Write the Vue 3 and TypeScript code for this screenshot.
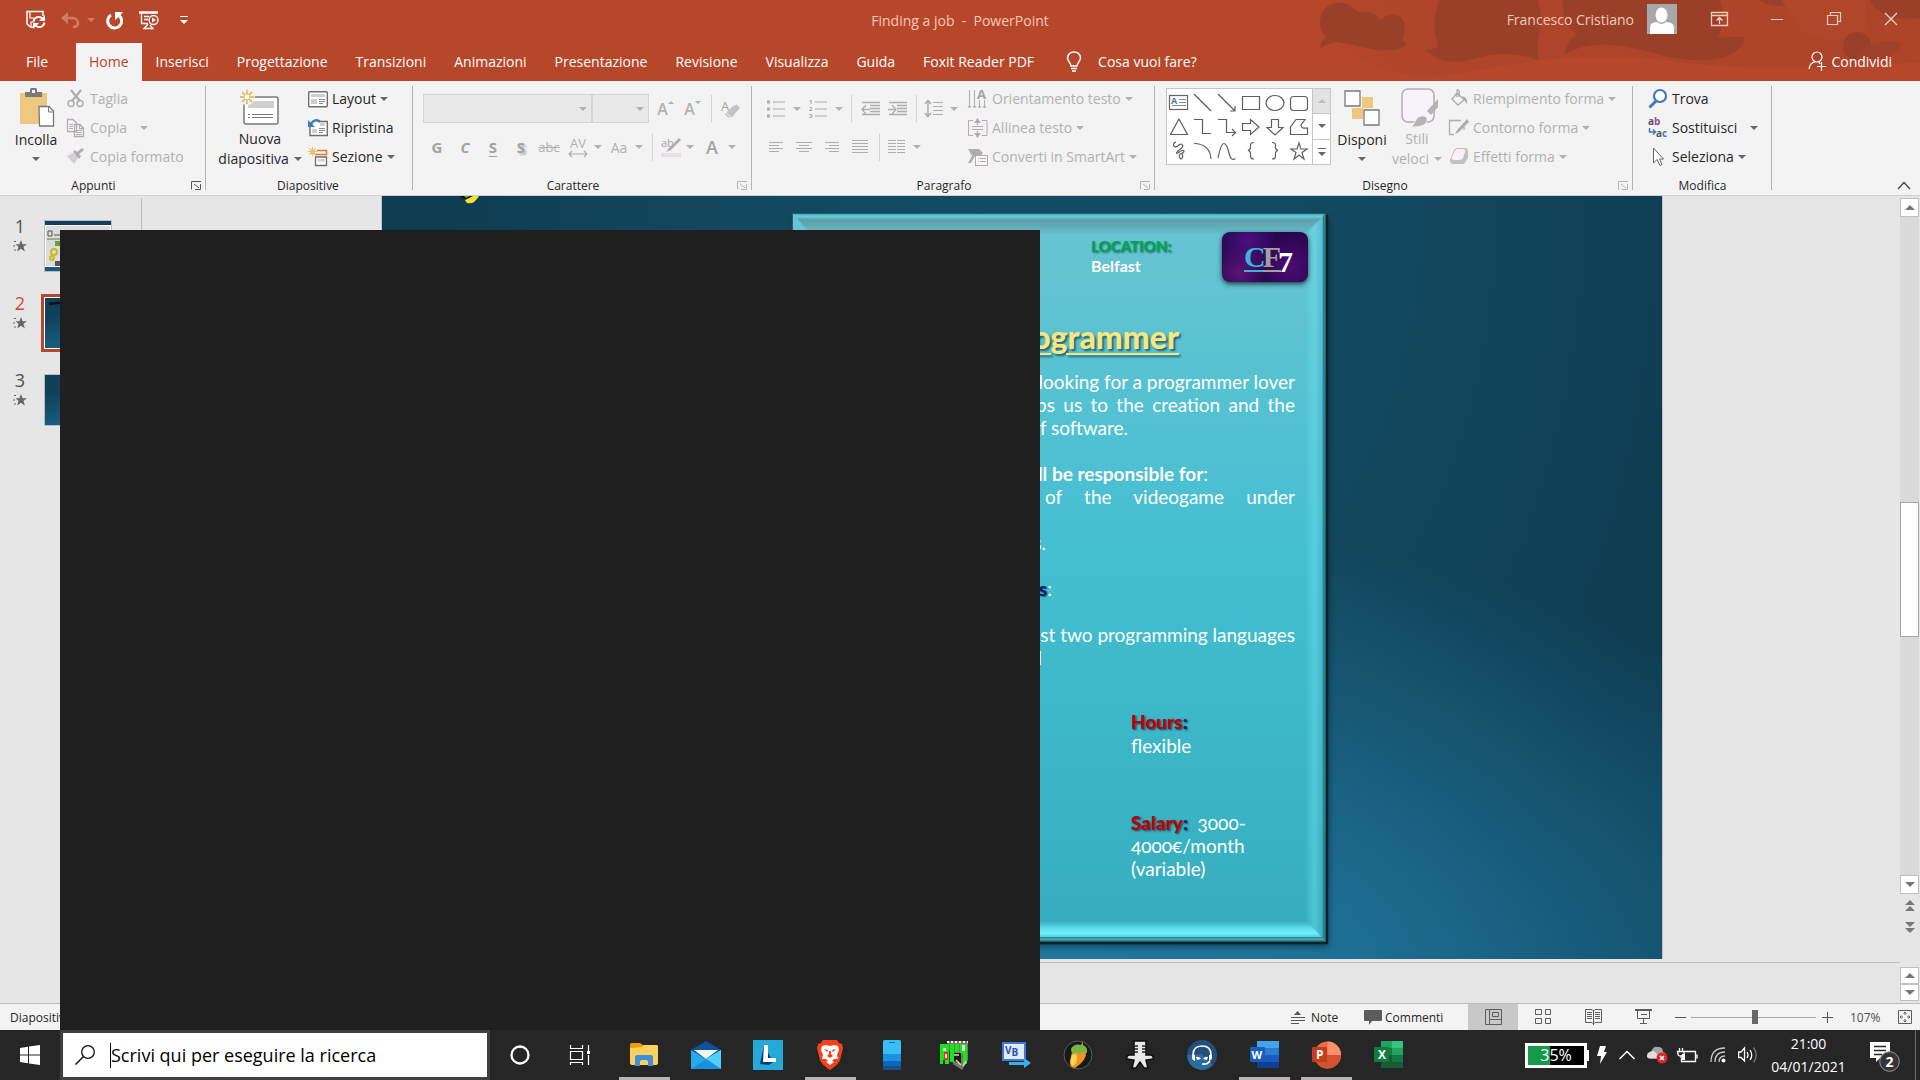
<script setup lang="ts">
import { h, ref } from 'vue'

interface Icon { w: number; h: number; body: string }

const G = '#b0adb0'
const icons: Record<string, Icon> = {
  save: { w: 20, h: 20, body: '<path d="M8 17H4.500L1 14V1.500H17V6" fill="none" stroke="#fff" stroke-width="1.500"/><path d="M4 2V8H8M5 17V12H8" fill="none" stroke="#fff" stroke-width="1.200"/><path d="M7.500 11.500C8 8 11 6.500 13.500 7 15.500 7.300 16.500 8 17.500 9.500M18.500 12.500C18 16 15 17.500 12.500 17 10.500 16.700 9.500 16 8.500 14.500" fill="none" stroke="#fff" stroke-width="2"/><path d="M19 5V11H13ZM7 19V13H13Z" fill="#fff"/>' },
  undo: { w: 18, h: 16, body: '<path d="M2 6H11C15 6 17 8.500 17 11S15 15 12 15" fill="none" stroke="#cf7d66" stroke-width="2.500"/><path d="M0 6L7 0V4L5 6 7 8V12Z" fill="#cf7d66"/>' },
  redo: { w: 17, h: 17, body: '<path d="M5 3A7 7 0 1 0 13 3.500" fill="none" stroke="#fff" stroke-width="3"/><path d="M9 0H17L14.500 3 11 6.500 9 8Z" fill="#fff"/>' },
  show: { w: 20, h: 19, body: '<path d="M0 1.500H19" stroke="#fff" stroke-width="2.500"/><path d="M2.500 2V12.500H9M5 5.500H10M5 8.500H9M9 13L5 17.500H14L11 14" fill="none" stroke="#fff" stroke-width="1.300"/><circle cx="14.500" cy="9" r="4.500" fill="none" stroke="#fff" stroke-width="1.300"/><path d="M13 6.500V11.500L17 9Z" fill="#fff"/>' },
  ribbonOpt: { w: 17, h: 14, body: '<path d="M.5.500H16.500V13.500H.5ZM.5 3.500H16.500M8.500 12V6M5.500 8.500L8.500 5.500 11.500 8.500" fill="none" stroke="#f7c9b9" stroke-width="1.300"/>' },
  min: { w: 12, h: 14, body: '<path d="M0 7.500H12" stroke="#f7c9b9"/>' },
  restore: { w: 14, h: 14, body: '<path d="M.5 3.500H10.500V12.500H.5ZM3.500 3V.5H13.500V9.500H11" fill="none" stroke="#f7c9b9" stroke-width="1.200"/>' },
  close: { w: 14, h: 14, body: '<path d="M1 1L13 13M13 1L1 13" stroke="#f7d4c8" stroke-width="1.300"/>' },
  bulb: { w: 16, h: 21, body: '<path d="M5 15C5 12 1.500 10.500 1.500 6.800 1.500 3.500 4.500 1 8 1S14.500 3.500 14.500 6.800C14.500 10.500 11 12 11 15Z" fill="none" stroke="#fff" stroke-width="1.500"/><path d="M5 17.500H11M6 20H10" stroke="#fff" stroke-width="1.500"/>' },
  share: { w: 18, h: 20, body: '<circle cx="9" cy="6" r="5" fill="none" stroke="#fff" stroke-width="1.200"/><path d="M1 18C1.500 14 4 11.500 7 11M11 11L12 13M9 15.500H18M13.500 11V20" fill="none" stroke="#fff" stroke-width="1.200"/>' },
  paste: { w: 35, h: 39, body: '<path d="M1 5H28V36H1Z" fill="#edc87e"/><path d="M6 9V4H11V1.500Q11 0 12.500 0H16.500Q18 0 18 1.500V4H23V9Z" fill="#7a7a7a"/><rect x="13" y="2" width="3" height="3" fill="#f3f3f3"/><path d="M20 18.500H30L34.500 23V38H20.500Z" fill="#fff" stroke="#797979" stroke-width="1.300"/><path d="M29.500 19V24H34" fill="none" stroke="#797979"/>' },
  cut: { w: 20, h: 20, body: `<path d="M5 1L14 12M15 1L6 12" stroke="${G}" stroke-width="2.200"/><circle cx="5" cy="14.500" r="3" fill="none" stroke="${G}" stroke-width="1.500"/><circle cx="14" cy="14.500" r="3" fill="none" stroke="${G}" stroke-width="1.500"/>` },
  copy: { w: 20, h: 20, body: `<path d="M1.500 1.500H7L10.500 5V13.500H1.500ZM8.500 6.500H14L17.500 10V18.500H8.500ZM13.500 7V10.500H17" fill="#f8f4f8" stroke="${G}" stroke-width="1.300"/><path d="M3 6.500H7M3 8.500H7M3 10.500H7M10 12.500H16M10 14.500H16M10 16.500H16" stroke="${G}"/>` },
  brush: { w: 20, h: 20, body: `<path d="M1 9L7 6 12 11 8 17Z" fill="#d4cfd4"/><path d="M7 5L13 12 15 9 13 7 18 3 16 1 11 5 9 3Z" fill="${G}"/>` },
  newSlide: { w: 40, h: 36, body: '<rect x="4" y="7" width="34" height="27" rx="2" fill="#fff" stroke="#7a7a7a" stroke-width="1.500"/><rect x="8" y="11" width="26" height="7" fill="#cfcfcf"/><path d="M8 24.500H10M12 24.500H33M8 27.500H10M12 27.500H33" stroke="#7a7a7a"/><circle cx="7" cy="7" r="8" fill="#f3f3f3"/><path d="M7 0V14M0 7H14M2 2L12 12M12 2L2 12" stroke="#edbb6a" stroke-width="1.800"/><circle cx="7" cy="7" r="3" fill="#fff" stroke="#edbb6a"/>' },
  layout: { w: 20, h: 20, body: '<rect x=".7" y="2.700" width="18.600" height="15" rx="1" fill="#fff" stroke="#6e6e6e" stroke-width="1.400"/><path d="M3 5H17V8H3ZM3 10H9V15H3Z" fill="#cfcfcf"/><path d="M11 10.500H17M11 12.500H17M11 14.500H15" stroke="#888"/>' },
  reset: { w: 20, h: 20, body: '<path d="M2 8V17.500H19.300V3.500H12" fill="#fff" stroke="#6e6e6e" stroke-width="1.400"/><path d="M12 5H17V8H12ZM4 11H9V15H4Z" fill="#cfcfcf"/><path d="M11 10.500H17M11 12.500H17M11 14.500H15" stroke="#888"/><path d="M3 6C5 2 9 1 12 4" fill="none" stroke="#3f7ab8" stroke-width="2.500"/><path d="M0 2V9H7Z" fill="#3f7ab8"/>' },
  section: { w: 20, h: 20, body: '<path d="M9 3.500H18.500V7.500H7" fill="none" stroke="#e07a2a" stroke-width="1.500"/><path d="M7.500 10H18.500V18.500H7.500Z" fill="#fff" stroke="#6e6e6e" stroke-width="1.300"/><path d="M9.500 12H16.500V14.500H9.500Z" fill="#cfcfcf"/><path d="M4.500 0V9M0 4.500H9M1.500 1.500L7.500 7.500M7.500 1.500L1.500 7.500" stroke="#edbb6a" stroke-width="1.200"/>' },
  eraser: { w: 20, h: 20, body: `<text x="0" y="12" font-family="Open Sans" font-size="13" fill="#a5a2a5">A</text><path d="M12 7L16 5.500 19 9 11 18 7 18.500 4 15Z" fill="#c5c2c5"/><path d="M4.500 13L10 18.500" stroke="#f3f3f3"/>` },
  strikeUnder: { w: 20, h: 8, body: `<path d="M1 4H19M4 1L1 4 4 7M16 1L19 4 16 7" fill="none" stroke="${G}" stroke-width="1.200"/>` },
  marker: { w: 20, h: 20, body: `<text x="0" y="10" font-family="Open Sans" font-size="11" fill="#a5a2a5">ab</text><path d="M18 1L20 3 10 13 5 15 8 11Z" fill="${G}"/><rect y="16" width="20" height="4" fill="#e6dfe6"/>` },
  bullets: { w: 20, h: 20, body: `<path d="M6 3H18M6 10H18M6 17H18" stroke="${G}" stroke-width="1.200"/><path d="M0 1.500H3V4.500H0ZM0 8.500H3V11.500H0ZM0 15.500H3V18.500H0Z" fill="${G}"/>` },
  numbers: { w: 20, h: 20, body: `<path d="M6 3H18M6 10H18M6 17H18" stroke="${G}" stroke-width="1.200"/><g font-family="Open Sans" font-weight="700" font-size="6" fill="#a5a2a5"><text y="5">1</text><text y="12">2</text><text y="19">3</text></g>` },
  dedent: { w: 20, h: 20, body: `<path d="M1 3.500H19M9 6.500H19M9 9.500H19M9 12.500H19M1 15.500H19M1 10.500H9M5 6L1 10.500 5 15" fill="none" stroke="${G}" stroke-width="1.300"/>` },
  indent: { w: 20, h: 20, body: `<path d="M1 3.500H19M9 6.500H19M9 9.500H19M9 12.500H19M1 15.500H19M0 10.500H8M4 6L8 10.500 4 15" fill="none" stroke="${G}" stroke-width="1.300"/>` },
  spacing: { w: 20, h: 20, body: `<path d="M8 3.500H18M8 7.500H18M8 11.500H18M8 15.500H18" stroke="${G}" stroke-width="1.200"/><path d="M3 1V18M0 5L3 1.500 6 5M0 14L3 17.500 6 14" fill="none" stroke="${G}" stroke-width="1.600"/>` },
  left: { w: 16, h: 14, body: `<path d="M1 2.500H15M1 5.500H11M1 8.500H15M1 11.500H11" stroke="${G}"/>` },
  center: { w: 16, h: 14, body: `<path d="M0 2.500H16M3 5.500H13M0 8.500H16M3 11.500H13" stroke="${G}"/>` },
  right: { w: 16, h: 14, body: `<path d="M1 2.500H15M5 5.500H15M1 8.500H15M5 11.500H15" stroke="${G}"/>` },
  justify: { w: 16, h: 14, body: `<path d="M0 .5H16M0 3.500H16M0 6.500H16M0 9.500H16M0 12.500H16" stroke="${G}"/>` },
  columns: { w: 20, h: 14, body: `<path d="M0 .5H8M0 3.500H8M0 6.500H8M0 9.500H8M0 12.500H8M9 .5H17M9 3.500H17M9 6.500H17M9 9.500H17M9 12.500H17" stroke="${G}"/>` },
  textDir: { w: 20, h: 20, body: `<path d="M1.500 1V19M6.500 1V19M11.500 11V19M16.500 11V19M0 17L1.500 19 3 17M5 17L6.500 19 8 17M10 17L11.500 19 13 17M15 17L16.500 19 18 17" fill="none" stroke="${G}"/><text x="9" y="10" font-family="Open Sans" font-weight="700" font-size="13" fill="#a5a2a5">A</text>` },
  alignText: { w: 20, h: 20, body: `<path d="M5 2.500H.5V17.500H5M14 2.500H19V17.500H14" fill="#f6f0f6" stroke="${G}"/><path d="M4 8.500H15M4 11.500H15M9.500 1V7M9.500 13V19" stroke="${G}" stroke-width="1.200"/><path d="M6 5L9.500 0 13 5ZM6 15L9.500 20 13 15Z" fill="${G}"/>` },
  smart: { w: 20, h: 20, body: `<path d="M0 2H11L15 6 12 9H7L3 16H0L4 9Z" fill="${G}"/><rect x="7.500" y="8.500" width="12" height="10" fill="#faf6fa" stroke="${G}"/><path d="M10 11.500H11M12 11.500H18M10 14.500H11M12 14.500H18" stroke="${G}"/>` },
  arrange: { w: 36, h: 36, body: '<path d="M18 7H29V18H18ZM8 18H19V29H8Z" fill="#edc87e"/><path d="M1 1H16V16H1ZM20 20H35V35H20Z" fill="#fff" stroke="#7a7a7a" stroke-width="1.300"/>' },
  styles: { w: 38, h: 39, body: `<rect x="1" y="1" width="32" height="33" rx="6" fill="#f8f2fa" stroke="${G}" stroke-width="1.500"/><path d="M37 11V19L30 27 26 23Z" fill="#b5b2b5"/><path d="M10 39C14 37 14 29 20 28 25 27 28 31 25 35 23 38 18 39 10 39Z" fill="#b5b2b5" stroke="#f3f3f3"/><path d="M24 27L29 31" stroke="#f3f3f3" stroke-width="2"/>` },
  fill: { w: 20, h: 20, body: `<path d="M8 4L15 11 9 16 3 10ZM8 8V1.500Q8 0 9.500 1T10 8" fill="none" stroke="${G}" stroke-width="1.400"/><path d="M13 7Q19 8 18 15L15 11Z" fill="${G}"/>` },
  outline: { w: 20, h: 20, body: `<path d="M12 2.500H.5V16.500H5M15 12V9" fill="none" stroke="${G}" stroke-width="1.300"/><path d="M18 1L20 4 10 14 6 16 8 12Z" fill="${G}"/>` },
  effects: { w: 20, h: 20, body: `<path d="M5 3Q6 1 9 1H16Q19 1 19 4V11L15 17H4Q1 17 1 13Z" fill="#c3bfc3"/><path d="M6 4Q7 2 9 2H14Q17 2 16 5L14 11Q13 13 10 13H5Q2 13 3 10Z" fill="#f8f2f8"/>` },
  find: { w: 20, h: 20, body: '<circle cx="12" cy="7" r="6" fill="#fff" stroke="#3f7ab8" stroke-width="2.200"/><path d="M8 12L1.500 18.500" stroke="#3f7ab8" stroke-width="3"/>' },
  replace: { w: 20, h: 20, body: '<g font-family="Open Sans" font-weight="700" font-size="10"><text x="0" y="7" fill="#555">a<tspan fill="#9150b0">b</tspan></text><text x="8" y="19" fill="#555">a<tspan fill="#3f7ab8">c</tspan></text></g><path d="M1.500 10V14H7M5 11.500L7.500 14 5 16.500" fill="none" stroke="#3f7ab8" stroke-width="1.500"/>' },
  select: { w: 20, h: 20, body: '<path d="M5.500 1V16L9 12.500 12 18.500 14 17.500 11.500 12H15.500Z" fill="#fff" stroke="#666"/>' },
  launch: { w: 11, h: 9, body: '<path d="M10 .5H.5V8.500M3 3L8 7M9.500 3V8.500H4" fill="none" stroke="currentColor"/>' },
  star: { w: 14, h: 12, body: '<path d="M8 0L9.600 4.200H14L10.500 6.800 11.800 11.500 8 8.700 4.200 11.500 5.500 6.800 2.500 4.200H6.400Z" fill="#666"/><path d="M1 1.500H3M0 6H2M1 10H3" stroke="#666"/>' },
  note: { w: 14, h: 13, body: '<path d="M3 4L6.500 0 10 4Z" fill="#555"/><path d="M0 6.500H14M0 9.500H14M0 12.500H8" stroke="#555"/>' },
  comment: { w: 18, h: 15, body: '<path d="M1 0H17Q18 0 18 1V10Q18 11 17 11H8L5 15V11H1Q0 11 0 10V1Q0 0 1 0Z" fill="#5c5c5c"/>' },
  normal: { w: 17, h: 16, body: '<path d="M.5.500H16.500V15.500H.5ZM4.500.5V15.500M4.500 10.500H16.500M7.500 3.500H13.500V7.500H7.500Z" fill="none" stroke="#5c5c5c"/>' },
  sorter: { w: 17, h: 16, body: '<path d="M.5.500H6.500V5.500H.5ZM10.500.5H15.500V5.500H10.500ZM.5 9.500H6.500V14.500H.5ZM10.500 9.500H15.500V14.500H10.500Z" fill="none" stroke="#5c5c5c"/>' },
  reading: { w: 17, h: 16, body: '<path d="M.5.500H7L8.500 2 10 .5H16.500V13.500H10L8.500 15 7 13.500H.5ZM8.500 1V16M2 3.500H7M2 5.500H7M2 7.500H7M2 9.500H7M10 3.500H15M10 5.500H15M10 7.500H15M10 9.500H15" fill="none" stroke="#5c5c5c"/>' },
  present: { w: 17, h: 16, body: '<path d="M0 1H17" stroke="#5c5c5c" stroke-width="2"/><path d="M2.500 2V9.500H14.500V2M8.500 10V14M5 14.500H12M6 5.500H12" fill="none" stroke="#5c5c5c"/>' },
  fit: { w: 14, h: 14, body: '<path d="M.5.500H13.500V13.500H.5ZM7 2V5M7 9V12M2 7H5M9 7H12M5.500 3.500L7 2 8.500 3.500M5.500 10.500L7 12 8.500 10.500M3.500 5.500L2 7 3.500 8.500M10.500 5.500L12 7 10.500 8.500" fill="none" stroke="#5c5c5c"/>' },
  win: { w: 20, h: 20, body: '<path d="M0 3L8 1.800V9.500H0ZM9 1.600L20 0V9.500H9ZM0 10.500H8V18.200L0 17ZM9 10.500H20V20L9 18.400Z" fill="#fff"/>' },
  search: { w: 20, h: 20, body: '<circle cx="13" cy="7" r="6.300" fill="none" stroke="#111" stroke-width="1.300"/><path d="M8.500 11.500L.5 19.500" stroke="#111" stroke-width="1.400"/>' },
  cortana: { w: 20, h: 20, body: '<circle cx="10" cy="10" r="8.500" fill="none" stroke="#fff" stroke-width="2.300"/>' },
  taskview: { w: 20, h: 20, body: '<path d="M.5 0V3.500H12.500V0M.5 6.500H12.500V14.500H.5ZM.5 20V17.500H12.500V20M18.500 0V6M18.500 10V20" fill="none" stroke="#fff" stroke-width="1.200"/><path d="M17 6H20V9H17Z" fill="#fff"/>' },
  explorer: { w: 28, h: 24, body: '<path d="M0 1.500Q0 0 1.500 0H10L13 2H26.500Q28 2 28 3.500V21H0Z" fill="#e3a000"/><path d="M0 5L12 4 14 2H26.500Q28 2 28 3.500V20Q28 22 26 22H2Q0 22 0 20Z" fill="#ffd05b"/><path d="M5 23V14Q5 12 7 12H21Q23 12 23 14V23H18V19Q18 17 16 17H12Q10 17 10 19V23Z" fill="#3c8fd9"/>' },
  mail: { w: 30, h: 28, body: '<path d="M0 9L15 0 30 9V18H0Z" fill="#0f4f9c"/><path d="M3 9H27L15 18Z" fill="#f3f3f3"/><path d="M0 9L15 18 30 9V28H0Z" fill="#28a8ea"/><path d="M30 9V28L15 18Z" fill="#4fd0f7"/><path d="M0 28L15 18 30 28Z" fill="#1b90dd"/>' },
  lapp: { w: 30, h: 30, body: '<rect width="30" height="30" fill="#25a9d8"/><path d="M11 5L7 24 16 25 20 22Z" fill="#0b3a78"/><path d="M11 5H15V18H23V22H10Z" fill="#fff"/>' },
  brave: { w: 26, h: 30, body: '<path d="M6 0H20L22 3 25 4 26 8 23 20Q22 24 13 30 4 24 3 20L0 8 1 4 4 3Z" fill="#f5401c"/><path d="M5 6L9 5 13 6 17 5 21 6 22 10 20 15 21 19 17 19 15 21 17 22 13 25 9 22 11 21 9 19 5 19 6 15 4 10Z" fill="#fff"/><path d="M7 9L11 10 10 12ZM19 9L15 10 16 12ZM10 16L12 14V11H14V14L16 16 13 18Z" fill="#f5401c"/>' },
  phone: { w: 18, h: 30, body: '<path d="M0 1.500Q0 0 1.500 0H16.500Q18 0 18 1.500V14H0Z" fill="#38c0f4"/><path d="M0 14H18V21H0Z" fill="#1a93df"/><path d="M0 21H18V26H0Z" fill="#0868bd"/><path d="M0 26H18V30H0Z" fill="#1a4f8a"/><path d="M6 2.500H12" stroke="#0b6ab5"/>' },
  game: { w: 30, h: 30, body: '<path d="M8 1H29V20L23 30 14 24Z" fill="#77776f"/><path d="M8 2H29" stroke="#eee" stroke-width="2" stroke-dasharray="2 2"/><path d="M1 4H10V24H6V20H4V24H1Z" fill="#19e51b"/><path d="M11 4H15V22H11ZM16 4H20V12H16ZM21 4H28V24H24V14H21Z" fill="#19e51b"/><path d="M4 8H7V11H4ZM23 5H26V11H23Z" fill="#eee"/><path d="M5 12H9V20H5Z" fill="#d8342b"/><path d="M6 14H8V18H6Z" fill="#f3e9a0"/><path d="M15 13H22V24L15 21Z" fill="#1c1c1c"/><path d="M15 15H20M17 20L22 25M24 26L27 21" stroke="#e0d9a0" stroke-width="1.500"/>' },
  vb: { w: 30, h: 28, body: '<rect x="1" y="1" width="24" height="19" fill="#3e78d8"/><rect x="3" y="3" width="20" height="15" fill="#dfeafa"/><text x="4" y="13" font-family="Open Sans" font-weight="700" font-size="10" fill="#2455a8">V<tspan dy="2">B</tspan></text><path d="M8 21H23V17L30 22 23 27V24H8Z" fill="#3bb0f0"/>' },
  fl: { w: 30, h: 30, body: '<circle cx="15" cy="15" r="14" fill="#151a1b" stroke="#596062"/><path d="M9 13Q16 8 23 12 24 20 12 28 6 28 7 21Z" fill="#f79420"/><path d="M9 14Q14 12 14 18T10 26Q6 24 9 14Z" fill="#ffd44f"/><path d="M8 9Q11 3 18 5L20 1 20 5Q25 7 24 13L19 12 17 15 14 12 9 15Z" fill="#7cb342"/>' },
  mic: { w: 28, h: 30, body: '<path d="M8 1H20V15H25Q28 16 27 19L20 20 22 28H18L14 22 10 28H6L8 20 1 19Q0 16 3 15H8Z" fill="#e9e9e9" stroke="#0c0c0c" stroke-width="1.500"/><path d="M7 6H12M16 6H21M7 9H12M16 9H21M7 12H12M16 12H21" stroke="#222" stroke-width="1.500"/>' },
  headset: { w: 30, h: 30, body: '<circle cx="15" cy="15" r="15" fill="#234f7c"/><path d="M0 15A15 15 0 0 0 26 25L15 14Z" fill="#2a6c9c"/><path d="M6 15Q6 6 15 6T24 15" fill="none" stroke="#fff" stroke-width="1.700"/><path d="M5 15H8V21Q5 20 5 18ZM22 15H25V18Q25 20 22 21ZM9 17Q12 16 14 19L10 20ZM21 17Q18 16 16 19L20 20Z" fill="#fff"/><path d="M23 21Q20 25 15 24" fill="none" stroke="#fff" stroke-width="1.700"/>' },
  word: { w: 30, h: 28, body: '<path d="M8 0H30V7H8Z" fill="#41a5ee"/><path d="M8 7H30V14H8Z" fill="#2b7cd3"/><path d="M8 14H30V21H8Z" fill="#185abd"/><path d="M8 21H30V27H8Z" fill="#103f91"/><rect x="1" y="6" width="15" height="15" rx="1" fill="#1b5ebe"/><text x="2.500" y="18" font-family="Open Sans" font-weight="700" font-size="11" fill="#fff">W</text>' },
  ppt: { w: 30, h: 28, body: '<circle cx="16.500" cy="14" r="13.500" fill="#ed6c47"/><path d="M16.500 .5A13.500 13.500 0 0 1 30 14H16.500Z" fill="#ff8f6b"/><path d="M30 14A13.500 13.500 0 0 1 3 14Z" fill="#d35230"/><rect x="1" y="6" width="15" height="15" rx="1" fill="#c43e1c"/><text x="5" y="18" font-family="Open Sans" font-weight="700" font-size="12" fill="#fff">P</text>' },
  excel: { w: 30, h: 28, body: '<path d="M8 0H19V7H8Z" fill="#21a366"/><path d="M19 0H30V7H19Z" fill="#33c481"/><path d="M8 7H19V14H8Z" fill="#107c41"/><path d="M19 7H30V14H19Z" fill="#21a366"/><path d="M8 14H30V27H8Z" fill="#185c37"/><path d="M19 14H30V21H19Z" fill="#107c41"/><rect x="1" y="6" width="15" height="15" rx="1" fill="#107c41"/><text x="5" y="18" font-family="Open Sans" font-weight="700" font-size="12" fill="#fff">X</text>' },
  bolt: { w: 10, h: 18, body: '<path d="M3 0H9L7 6H10L3 18 4 10H0Z" fill="#fff"/>' },
  chevron: { w: 16, h: 10, body: '<path d="M.5 9L8 1.500 15.500 9" fill="none" stroke="#fff" stroke-width="1.500"/>' },
  cloud: { w: 21, h: 18, body: '<path d="M4 13Q0 13 0 9.500T4 6Q6 0 11 1 16 1 16 6 20 7 19 11L17 13Z" fill="#a5a5a5"/><path d="M0 10Q1 5 7 5L14 12H3Q0 12 0 10Z" fill="#dedede"/><circle cx="15" cy="12" r="5.500" fill="#e0242f"/><path d="M13 10L17 14M17 10L13 14" stroke="#fff" stroke-width="1.500"/>' },
  plug: { w: 21, h: 15, body: '<path d="M6 3.500H18.500V13.500H4.500V10M20 6.500V10.500M2.500 0V3M5.500 0V3M.5 3.500H7V6Q7 8 4 8T1 6ZM4 8V10" fill="none" stroke="#fff" stroke-width="1.300"/><path d="M5 6H8V12H5Z" fill="#fff"/>' },
  wifi: { w: 16, h: 16, body: '<path d="M1 15Q1 1 15 1M5 15Q5 5 15 5M9 15Q9 9 15 9" fill="none" stroke="#ccc" stroke-width="1.300"/><circle cx="13.500" cy="13.500" r="2" fill="#fff"/>' },
  sound: { w: 20, h: 18, body: '<path d="M.7 6H3L6.500 2V15L3 11.500H.7ZM9 6Q11 9 9 12M12 4Q15.500 9 12 14" fill="none" stroke="#fff" stroke-width="1.300"/><path d="M15.500 1.500Q21 9 15.500 16.500" fill="none" stroke="#777" stroke-width="1.300"/>' },
  notif: { w: 30, h: 30, body: '<path d="M0 0H20V16H10L6 20V16H0Z" fill="#fff"/><path d="M4 4.500H16M4 8.500H16M4 12.500H12" stroke="#262626" stroke-width="1.300"/><circle cx="19.500" cy="19.500" r="9.800" fill="#353535" stroke="#999"/><text x="19.500" y="25" text-anchor="middle" font-family="Open Sans" font-weight="700" font-size="14" fill="#fff">2</text>' },
  up2: { w: 10, h: 11, body: '<path d="M0 5L5 0 10 5ZM0 11L5 6 10 11Z" fill="#777"/>' },
  down2: { w: 10, h: 11, body: '<path d="M0 0H10L5 5ZM0 6H10L5 11Z" fill="#777"/>' },
}

const shapes: string[] = [
  '<rect x="2.500" y="4.500" width="18" height="14" fill="#fff" stroke="#666"/><text x="4" y="13" font-family="Open Sans" font-weight="700" font-size="9" fill="#3f7ab8" stroke="none">A</text><path d="M12 8.500H19M12 11.500H19M5 14.500H19" stroke="#888"/>',
  '<path d="M3 3L20 20"/>',
  '<path d="M3 3L20 20M20 15V20H15"/>',
  '<path d="M3.500 5.500H20.500V18.500H3.500Z"/>',
  '<ellipse cx="12" cy="12" rx="9" ry="7.500"/>',
  '<rect x="3.500" y="5.500" width="17" height="14" rx="3"/>',
  '<path d="M12 4L20.500 19.500H3.500Z"/>',
  '<path d="M3 4.500H11.500V18.500H20"/>',
  '<path d="M3 4.500H11.500V17.500H20M17 14L20.500 17.500 17 21"/>',
  '<path d="M3.500 8.500H11.500V4.500L20 12 11.500 19.500V15.500H3.500Z"/>',
  '<path d="M8.500 4.500H15.500V12.500H20L12 20 4 12.500H8.500Z"/>',
  '<path d="M3.500 19.500V12L9 4.500H18L14 10Q14 14 20.500 13V19.500Z"/>',
  '<path d="M9 3Q5 5 7 7 9 9 12 6 15 4 16 7 15 9 11 12 8 15 11 14 16 10 17 12 17 14 13 15 11 18 14 20 17 18 15 15"/>',
  '<path d="M3 4.500Q19 5 20 20"/>',
  '<path d="M3 19Q6 4 9 4.500T14 14 20.500 19.500"/>',
  '<path d="M15 3.500Q11 3.500 11.500 7T9 11.500Q12 12 11.500 16T15 20"/>',
  '<path d="M9 3.500Q13 3.500 12.500 7T15 11.500Q12 12 12.500 16T9 20"/>',
  '<path d="M12 4L14 10H20L15 13.500 17 20 12 16 7 20 9 13.500 4 10H10Z"/>',
]

const tabs = ['Inserisci', 'Progettazione', 'Transizioni', 'Animazioni', 'Presentazione', 'Revisione', 'Visualizza', 'Guida', 'Foxit Reader PDF']
const aligns = [['left', 'Allinea a sinistra'], ['center', 'Centra'], ['right', 'Allinea a destra'], ['justify', 'Giustifica']]
const apps = [
  { icon: 'explorer', name: 'Esplora file', open: true },
  { icon: 'mail', name: 'Posta', open: false },
  { icon: 'lapp', name: 'L', open: false },
  { icon: 'brave', name: 'Brave', open: true },
  { icon: 'phone', name: 'Telefono', open: false },
  { icon: 'game', name: 'Gioco', open: false },
  { icon: 'vb', name: 'Visual Basic', open: false },
  { icon: 'fl', name: 'FL Studio', open: false },
  { icon: 'mic', name: 'Microfono', open: false },
  { icon: 'headset', name: 'Cuffie', open: false },
  { icon: 'word', name: 'Word', open: true },
  { icon: 'ppt', name: 'PowerPoint', open: true },
  { icon: 'excel', name: 'Excel', open: false },
]
const tray = ['bolt', 'chevron', 'cloud', 'plug', 'wifi', 'sound']
const views = [['normal', 'Normale'], ['sorter', 'Sequenza diapositive'], ['reading', 'Lettura'], ['present', 'Presentazione']]
const zoom = ref(51)
const query = ref('')

const Ico = (props: { n: string }) => {
  const i = icons[props.n]
  return h('svg', { width: i.w, height: i.h, viewBox: `0 0 ${i.w} ${i.h}`, 'aria-hidden': 'true', innerHTML: i.body })
}
Ico.props = ['n']
</script>

<template>
  <div class="screen">
    <header class="head">
      <svg class="deco" width="640" height="81" viewBox="0 0 640 81" aria-hidden="true">
        <defs><linearGradient id="fade"><stop offset="0" stop-color="#a9432a" stop-opacity="0" /><stop offset=".25" stop-color="#a9432a" stop-opacity=".6" /><stop offset="1" stop-color="#a9432a" stop-opacity=".7" /></linearGradient></defs>
        <path d="M0 0H640V62Q500 75 400 62T200 70 60 40Z" fill="url(#fade)" />
        <path d="M42 32Q36 16 48 6 62 -2 74 8 78 14 86 12 96 12 100 20 112 10 122 18 128 28 122 40 128 42 126 46 112 52 96 50 70 44 56 42 46 44 40 49 40 40 46 38Z" fill="#9a4029" />
        <path d="M146 50Q154 50 158 46 150 20 160 0H258Q264 20 258 40V60Q225 48 190 60 160 66 146 50ZM283 0H440Q446 20 438 38 455 36 465 37 462 56 430 60 400 62 370 52 310 36 285 55 285 44 296 34 280 20 283 0Z" fill="#9a4029" />
        <path d="M480 0H530Q505 10 486 4ZM590 0H640V18Q600 22 590 0Z" fill="#9a4029" /><path d="M502 0H586V28Q560 50 520 30Z" fill="#b0472b" />
        <circle cx="577" cy="46" r="14" fill="#9a4029" /><path d="M577 52Q600 38 620 42 624 54 600 60 585 62 577 60Z" fill="#a0422a" />
      </svg>
      <div class="titlebar">
        <div class="qat">
          <button aria-label="Salva"><Ico n="save" /></button>
          <button class="undo" aria-label="Annulla" disabled><Ico n="undo" /><i class="car"></i></button>
          <button aria-label="Ripeti"><Ico n="redo" /></button>
          <button class="qshow" aria-label="Presentazione"><Ico n="show" /></button>
          <button class="more" aria-label="Personalizza"><i class="car"></i></button>
        </div>
        <div class="doc">Finding a job&nbsp; -&nbsp; PowerPoint</div>
        <div class="account">
          <span>Francesco Cristiano</span>
          <svg class="avatar" width="30" height="30" viewBox="0 0 30 30" aria-hidden="true"><rect width="30" height="30" fill="#a8a8a8" /><ellipse cx="14.500" cy="11" rx="6" ry="7.500" fill="#fff" /><path d="M3 30V24Q3 18 10 18 14.500 22 19 18 27 18 27 24V30Z" fill="#fff" /></svg>
          <button v-for="b in ['ribbonOpt', 'min', 'restore', 'close']" :key="b" class="winbtn" :aria-label="b"><Ico :n="b" /></button>
        </div>
      </div>
      <nav class="tabs">
        <button class="tab file">File</button>
        <button class="tab active">Home</button>
        <button v-for="t in tabs" :key="t" class="tab">{{ t }}</button>
        <button class="tab tell"><Ico n="bulb" /><span>Cosa vuoi fare?</span></button>
        <button class="tab share"><Ico n="share" /><span>Condividi</span></button>
      </nav>
    </header>

    <section class="ribbon">
      <div class="group g1">
        <div class="body">
          <button class="big"><span class="pic"><Ico n="paste" /></span>Incolla<span class="ln"><i class="car"></i></span></button>
          <div class="col">
            <button class="sm" disabled><span class="ic"><Ico n="cut" /></span>Taglia</button>
            <button class="sm wide" disabled><span class="ic"><Ico n="copy" /></span>Copia<i class="car"></i></button>
            <button class="sm" disabled><span class="ic"><Ico n="brush" /></span>Copia formato</button>
          </div>
        </div>
        <div class="label">Appunti<button class="launch" aria-label="Opzioni Appunti"><Ico n="launch" /></button></div>
      </div>

      <div class="group g2">
        <div class="body">
          <button class="big"><span class="pic"><Ico n="newSlide" /></span>Nuova<span class="ln">diapositiva<i class="car"></i></span></button>
          <div class="col">
            <button class="sm"><span class="ic"><Ico n="layout" /></span>Layout<i class="car"></i></button>
            <button class="sm"><span class="ic"><Ico n="reset" /></span>Ripristina</button>
            <button class="sm"><span class="ic"><Ico n="section" /></span>Sezione<i class="car"></i></button>
          </div>
        </div>
        <div class="label">Diapositive</div>
      </div>

      <div class="group g3">
        <div class="body rows">
          <div class="row">
            <span class="sel font"><select aria-label="Tipo di carattere" disabled><option></option></select><i class="car"></i></span>
            <span class="sel size"><select aria-label="Dimensione carattere" disabled><option></option></select><i class="car"></i></span>
            <button class="t grow" disabled aria-label="Aumenta dimensione">A<i class="car flip"></i></button>
            <button class="t grow" disabled aria-label="Riduci dimensione">A<i class="car"></i></button>
            <span class="sep"></span>
            <button class="t" disabled aria-label="Cancella formattazione"><Ico n="eraser" /></button>
          </div>
          <div class="row">
            <button class="t b" disabled>G</button>
            <button class="t b it" disabled>C</button>
            <button class="t b un" disabled>S</button>
            <button class="t b sh" disabled>S</button>
            <button class="t st" disabled>abc</button>
            <button class="split" disabled aria-label="Spaziatura"><span class="av">AV<Ico n="strikeUnder" /></span><i class="car"></i></button>
            <button class="split aa" disabled><span>Aa</span><i class="car"></i></button>
            <span class="sep"></span>
            <button class="split tight" disabled aria-label="Evidenziatore"><Ico n="marker" /><i class="car"></i></button>
            <button class="split fc" disabled><span>A</span><i class="car"></i></button>
          </div>
        </div>
        <div class="label">Carattere<button class="launch dim" aria-label="Opzioni Carattere"><Ico n="launch" /></button></div>
      </div>

      <div class="group g4">
        <div class="body">
          <div class="rows para">
            <div class="row">
              <button class="split" disabled aria-label="Elenco puntato"><Ico n="bullets" /><i class="car"></i></button>
              <button class="split" disabled aria-label="Elenco numerato"><Ico n="numbers" /><i class="car"></i></button>
              <span class="sep"></span>
              <button class="t" disabled aria-label="Riduci rientro"><Ico n="dedent" /></button>
              <button class="t" disabled aria-label="Aumenta rientro"><Ico n="indent" /></button>
              <span class="sep"></span>
              <button class="split tight" disabled aria-label="Interlinea"><Ico n="spacing" /><i class="car"></i></button>
            </div>
            <div class="row">
              <button v-for="a in aligns" :key="a[0]" class="t" disabled :aria-label="a[1]"><Ico :n="a[0]" /></button>
              <span class="sep"></span>
              <button class="split tight" disabled aria-label="Colonne"><Ico n="columns" /><i class="car"></i></button>
            </div>
          </div>
          <div class="col">
            <button class="sm" disabled><span class="ic"><Ico n="textDir" /></span>Orientamento testo<i class="car"></i></button>
            <button class="sm" disabled><span class="ic"><Ico n="alignText" /></span>Allinea testo<i class="car"></i></button>
            <button class="sm" disabled><span class="ic"><Ico n="smart" /></span>Converti in SmartArt<i class="car"></i></button>
          </div>
        </div>
        <div class="label">Paragrafo<button class="launch dim" aria-label="Opzioni Paragrafo"><Ico n="launch" /></button></div>
      </div>

      <div class="group g5">
        <div class="body">
          <div class="gallery">
            <div class="shapes">
              <button v-for="(s, i) in shapes" :key="i" :aria-label="'Forma ' + (i + 1)"><svg width="24" height="24" viewBox="0 0 24 24" fill="none" stroke="#5e5e5e" stroke-width="1.200" v-html="s"></svg></button>
            </div>
            <div class="gscroll">
              <button class="off" aria-label="Riga su"><i class="car flip"></i></button>
              <button aria-label="Riga giù"><i class="car"></i></button>
              <button class="bar" aria-label="Altro"><i class="car"></i></button>
            </div>
          </div>
          <button class="big arr"><span class="pic"><Ico n="arrange" /></span>Disponi<span class="ln"><i class="car"></i></span></button>
          <button class="big sty" disabled><span class="pic"><Ico n="styles" /></span>Stili<span class="ln">veloci<i class="car"></i></span></button>
          <div class="col">
            <button class="sm" disabled><span class="ic"><Ico n="fill" /></span>Riempimento forma<i class="car"></i></button>
            <button class="sm" disabled><span class="ic"><Ico n="outline" /></span>Contorno forma<i class="car"></i></button>
            <button class="sm" disabled><span class="ic"><Ico n="effects" /></span>Effetti forma<i class="car"></i></button>
          </div>
        </div>
        <div class="label">Disegno<button class="launch dim" aria-label="Opzioni Disegno"><Ico n="launch" /></button></div>
      </div>

      <div class="group g6">
        <div class="body">
          <div class="col">
            <button class="sm"><span class="ic"><Ico n="find" /></span>Trova</button>
            <button class="sm wide"><span class="ic"><Ico n="replace" /></span>Sostituisci<i class="car"></i></button>
            <button class="sm"><span class="ic"><Ico n="select" /></span>Seleziona<i class="car"></i></button>
          </div>
        </div>
        <div class="label">Modifica</div>
      </div>
      <button class="collapse" aria-label="Comprimi barra multifunzione"><svg width="14" height="9" viewBox="0 0 14 9"><path d="M1 8L7 1.500 13 8" fill="none" stroke="#444" stroke-width="1.300" /></svg></button>
    </section>

    <main class="work">
      <aside class="thumbs">
        <div class="item"><div class="num">1<Ico n="star" /></div>
          <div class="thumb one"><svg width="66" height="42" viewBox="0 0 66 42" aria-hidden="true"><rect width="66" height="42" fill="#fff" /><rect x="1" y="1" width="64" height="40" fill="#dcdcda" /><path d="M3 6H7V11H3ZM9 10H16" stroke="#555" fill="none" /><path d="M2 14H15" stroke="#5a7a3a" /><path d="M10 16H24V21H10Z" fill="#58a832" /><circle cx="9" cy="27" r="3" fill="none" stroke="#c9b820" stroke-width="2" /><circle cx="7" cy="33" r="2" fill="none" stroke="#c9b820" stroke-width="2" /><path d="M10 36H20V41H10Z" fill="#555" /></svg></div>
        </div>
        <div class="item cur"><div class="num">2<Ico n="star" /></div><div class="thumb"><svg width="66" height="50" viewBox="0 0 66 50" aria-hidden="true"><path d="M4 6L20 4" stroke="#07131a" stroke-width="2.500" /></svg></div></div>
        <div class="item"><div class="num">3<Ico n="star" /></div><div class="thumb"></div></div>
      </aside>

      <div class="editor">
        <div class="stage">
          <article class="slide">
            <svg class="scribble" width="24" height="12" viewBox="0 0 24 12" aria-hidden="true"><path d="M2 0L7 7Q14 9 19 0Z" fill="#f5df2f" /><path d="M0 0L5 4 13 0Z" fill="#0a0a0a" /><path d="M4 0L6 2 10 0Z" fill="#25c13c" /></svg>
            <div class="card">
              <div class="edge top"></div><div class="edge side"></div><div class="edge bottom"></div>
              <div class="loc"><strong>LOCATION:</strong><b>Belfast</b></div>
              <div class="logo"><span class="c">C</span><span class="f">F</span><span class="s">7</span></div>
              <h1>Programmer</h1>
              <div class="copy">
                <p>We are looking for a programmer lover</p>
                <p class="spread l2">helps us to the creation and the</p>
                <p class="e1">development of software.</p>
                <p class="gap e2"><b>You will be responsible for</b>:</p>
                <p class="spread l5">of the videogame under</p>
                <p class="gap e3">bugs.</p>
                <p class="gap e4"><strong>Skills</strong>:</p>
                <p class="gap">At least two programming languages</p>
                <p class="e5">required</p>
              </div>
              <div class="fact hours"><strong>Hours<i>:</i></strong><br>flexible</div>
              <div class="fact salary"><strong>Salary<i>:</i></strong>&nbsp; 3000-<br>4000€/month<br>(variable)</div>
            </div>
          </article>
        </div>
        <div class="notes"></div>
      </div>

      <div class="scrolls">
        <div class="vscroll">
          <button class="sb" aria-label="Su"><i class="car flip"></i></button>
          <div class="track"><span class="before"></span><span class="thumbbar"></span><span class="after"></span></div>
          <button class="sb" aria-label="Giù"><i class="car"></i></button>
          <button class="pg" aria-label="Diapositiva precedente"><Ico n="up2" /></button>
          <button class="pg" aria-label="Diapositiva successiva"><Ico n="down2" /></button>
        </div>
        <div class="nscroll">
          <button class="sb" aria-label="Note su"><i class="car flip"></i></button>
          <button class="sb" aria-label="Note giù"><i class="car"></i></button>
        </div>
      </div>
    </main>

    <footer class="status">
      <span class="pos">Diapositiva 2 di 3</span>
      <button class="stx"><Ico n="note" />Note</button>
      <button class="stx cm"><Ico n="comment" />Commenti</button>
      <button v-for="(v, i) in views" :key="v[0]" class="view" :class="{ on: i === 0 }" :aria-label="v[1]"><Ico :n="v[0]" /></button>
      <button class="pm minus" aria-label="Zoom indietro"></button>
      <input v-model="zoom" class="zoom" type="range" min="0" max="100" aria-label="Zoom">
      <button class="pm plus" aria-label="Zoom avanti"></button>
      <span class="pct">107%</span>
      <button class="fit" aria-label="Adatta"><Ico n="fit" /></button>
    </footer>

    <div class="flyout"></div>

    <footer class="taskbar">
      <button class="start" aria-label="Start"><Ico n="win" /></button>
      <label class="searchbox"><Ico n="search" /><span class="caret"></span><input v-model="query" type="text" placeholder="Scrivi qui per eseguire la ricerca" aria-label="Cerca"></label>
      <button class="sys" aria-label="Cortana"><Ico n="cortana" /></button>
      <button class="sys tv" aria-label="Visualizzazione attività"><Ico n="taskview" /></button>
      <button v-for="a in apps" :key="a.icon" class="app" :class="{ open: a.open }" :aria-label="a.name"><Ico :n="a.icon" /></button>
      <div class="tray">
        <div class="battery">35%</div>
        <span v-for="t in tray" :key="t" class="ti" :class="t"><Ico :n="t" /></span>
        <div class="clock"><span>21:00</span><span>04/01/2021</span></div>
        <button class="notif" aria-label="Notifiche"><Ico n="notif" /></button>
        <span class="peek"></span>
      </div>
    </footer>
  </div>
</template>

<style>
body { margin: 0; overflow: hidden; }
</style>

<style scoped>
.screen { position: relative; display: flex; flex-direction: column; height: 100vh; overflow: hidden; font-family: "Open Sans", "Noto Sans", sans-serif; font-size: 14px; color: #262626; background: #e6e6e6; }
button { border: 0; padding: 0; margin: 0; background: none; font: inherit; color: inherit; display: flex; align-items: center; justify-content: center; flex: none; white-space: nowrap; }
svg { display: block; flex: none; overflow: visible; }
.car { display: block; flex: none; width: 0; height: 0; border: 4px solid transparent; border-top-color: #666; border-bottom: 0; }
.car.flip { transform: rotate(180deg); }
button:disabled { color: #b1b1b1; }
button:disabled .car, .sel .car { border-top-color: #b1b1b1; }

.head { position: relative; flex: none; background: #b7472a; color: #fff; }
.deco { position: absolute; top: 0; right: 0; overflow: hidden; }
.titlebar { position: relative; display: grid; grid-template-columns: 1fr auto 1fr; height: 43px; color: #f7c9b9; }
.qat { display: flex; align-items: center; height: 40px; padding-left: 26px; }
.qat .undo { margin-left: 15px; gap: 8px; }
.qat .undo .car { border-top-color: #cf7d66; }
.qat .undo + button { margin-left: 11px; }
.qshow { margin-left: 16px; }
.more { margin-left: 21px; border-top: 1px solid #fff; padding-top: 3px; }
.more .car { border-top-color: #fff; }
.doc { line-height: 42px; }
.account { display: flex; justify-content: flex-end; align-items: center; height: 38px; padding-right: 1px; }
.avatar { margin: 0 14px 0 13px; }
.winbtn { width: 57px; height: 38px; }
.tabs { position: relative; display: flex; height: 38px; }
.tab { padding: 0 14px 2px; height: 38px; }
.tab.file { width: 76px; padding-right: 16px; }
.tab.active { background: #f3f3f3; color: #b7472a; padding-left: 13px; padding-right: 13px; }
.tab.tell { gap: 16px; margin-left: 4px; }
.tab.share { margin-left: auto; gap: 5px; padding-right: 28px; }

.ribbon { flex: none; display: flex; height: 104px; padding: 5px 0; border-bottom: 1px solid #cfcfcf; background: #f3f3f3; }
.group { box-sizing: border-box; flex: none; height: 104px; border-right: 1px solid #b5b5b5; }
.g1 { width: 206px; padding-left: 10px; }
.g2 { width: 207px; padding-left: 12px; }
.g3 { width: 339px; padding-left: 10px; }
.g4 { width: 403px; padding-left: 10px; }
.g5 { width: 478px; padding-left: 11px; }
.g6 { width: 139px; padding-left: 15px; }
.body { display: flex; height: 83px; }
.label { position: relative; display: flex; justify-content: center; align-items: center; margin-top: 10px; padding-right: 28px; height: 14px; font-size: 12px; line-height: 14px; }
.g2 .label, .g6 .label { padding-right: 14px; }
.launch { position: absolute; right: 3px; top: 2px; color: #555; }
.launch.dim { color: #b5b5b5; }
.big { flex-direction: column; justify-content: flex-start; width: 52px; line-height: 20px; }
.big .pic { height: 46px; display: flex; align-items: center; }
.big .ln { display: flex; align-items: center; gap: 5px; height: 20px; }
.g2 .big { width: 84px; }
.g5 .arr { margin-left: 5px; }
.g5 .sty { width: 56px; margin-left: 1px; }
.sty .pic { padding-left: 5px; }
.col { display: flex; flex-direction: column; gap: 4px; margin-left: 4px; align-items: flex-start; }
.g2 .col { margin-left: 6px; }
.g6 .col { margin-left: 0; }
.sm { height: 25px; gap: 4px; }
.sm .ic { width: 20px; }
.sm.wide .car { margin-left: 9px; }
.rows { flex-direction: column; display: flex; }
.row { display: flex; align-items: center; height: 29px; margin-top: 8px; }
.row + .row { margin-top: 10px; height: 28px; }
.para { width: 206px; }
.g4 .col { margin-left: 0; }
.sel { position: relative; display: flex; align-items: center; height: 29px; }
.sel select { appearance: none; box-sizing: border-box; width: 100%; height: 29px; margin: 0; border: 1px solid #c6c6c6; border-radius: 0; background: #e5e5e5; }
.sel .car { position: absolute; right: 5px; }
.sel.font { width: 169px; }
.sel.size { width: 57px; margin-right: 3px; }
.t { width: 27px; height: 28px; }
.row + .row .t { width: 28px; }
.grow { font-size: 16px; font-weight: 600; }
.grow .car { align-self: flex-start; margin-top: 6px; border-width: 3px; border-bottom: 0; }
.b { font-size: 15px; font-weight: 700; color: #a3a3a3; }
.b:disabled { color: #a3a3a3; }
.it { font-style: italic; }
.un { text-decoration: underline; text-underline-offset: 3px; }
.sh { text-shadow: 2px 2px 2px #bbb; }
.st { text-decoration: line-through; font-size: 13px; }
.sep { width: 1px; height: 27px; margin: 0 5px; background: #d2d2d2; }
.split { width: 42px; height: 28px; padding-left: 5px; justify-content: flex-start; gap: 6px; }
.split > span { width: 20px; }
.split.tight { padding-left: 3px; gap: 5px; }
.av { font-size: 13px; line-height: 13px; display: flex; flex-direction: column; }
.split.aa { padding-left: 4px; }
.split.fc { padding-left: 2px; font-size: 18px; font-weight: 600; }
.split.fc:disabled { color: #a3a3a3; }

.gallery { display: flex; box-sizing: border-box; width: 165px; height: 77px; margin-top: 2px; border: 1px solid #c6c6c6; background: #fff; }
.shapes { display: grid; grid-template-columns: repeat(6, 24px); grid-template-rows: repeat(3, 24px); padding-top: 2px; width: 145px; }
.gscroll { display: flex; flex-direction: column; flex: 1; border-left: 1px solid #c6c6c6; }
.gscroll button { flex: 1; border-bottom: 1px solid #c6c6c6; }
.gscroll button:last-child { border-bottom: 0; }
.gscroll .off { background: #e3e3e3; }
.gscroll .off .car { border-top-color: #bbb; }
.bar { flex-direction: column; gap: 3px; }
.bar::before { content: ""; width: 8px; height: 1px; background: #666; }
.collapse { margin-left: auto; align-self: flex-end; padding: 0 9px 0 0; }

.work { flex: 1; min-height: 0; display: flex; }
.thumbs { box-sizing: border-box; width: 142px; flex: none; margin-top: 2px; border-right: 1px solid #bdbdbd; padding-top: 16px; overflow: hidden; }
.item { display: flex; height: 77px; align-items: flex-start; }
.num { box-sizing: border-box; width: 44px; padding-right: 4px; display: flex; flex-direction: column; align-items: center; gap: 2px; font-size: 18px; line-height: 24px; color: #505050; }
.cur .num { color: #d24726; }
.thumb { width: 66px; height: 50px; margin-top: 6px; border: 1px solid #bdbdbd; background: linear-gradient(170deg, #10405a 30%, #1b668a); }
.one svg { margin-top: 4px; }
.cur .thumb { border-color: #fff; outline: 3px solid #b7472a; }

.editor { flex: 1; min-width: 0; display: flex; flex-direction: column; margin-left: 2px; }
.stage { flex: 1; min-height: 0; display: flex; justify-content: center; align-items: flex-end; padding-bottom: 3px; overflow: hidden; }
.slide { position: relative; flex: none; width: 1280px; height: 960px; border-right: 1px solid #c2c2c2; border-left: 1px solid #c2c2c2; background: radial-gradient(ellipse 74% 50% at 50% 104%, #21779f 0, #1f739a 30%, transparent), radial-gradient(ellipse 50% 95% at 54% 20%, #134b66 0, #13495f 50%, transparent), #0e3c51; }
.scribble { position: absolute; left: 78px; top: 197px; }
.card { position: absolute; left: 411px; top: 215px; width: 532px; height: 727px; background: linear-gradient(#6ac4d4, #57c2d2 22%, #44bfd2 46%, #3ebacb 62%, #36adbf); box-shadow: 0 0 0 1px #20606c, 2px 2px 1px 1px #0b2229, 3px 5px 7px rgba(0, 0, 0, .5); }
.edge { position: absolute; }
.top { left: 0; right: 0; top: 0; height: 20px; background: linear-gradient(#45a3b3, #66cfde 10%, #60c2d0 18%, #5f9fab 28%, #62a8b5 55%, #66c0cf); clip-path: polygon(0 0, 100% 0, calc(100% - 18px) 100%, 18px 100%); }
.side { right: 0; top: 0; bottom: 0; width: 19px; background: linear-gradient(90deg, rgba(80, 210, 225, .1), rgba(110, 225, 240, .45) 45%, rgba(70, 180, 195, .4) 85%, #277f8d 92%, #2b8b9a); clip-path: polygon(100% 0, 100% 100%, 0 calc(100% - 18px), 0 18px); }
.bottom { left: 0; right: 0; bottom: 0; height: 20px; background: linear-gradient(#36adbf, #5cdaea 35%, #70f1ff 60%, #56cfe0 78%, #23717e 84%, #51bccb 90%, #246f7b); clip-path: polygon(18px 0, calc(100% - 18px) 0, 100% 100%, 0 100%); }
.loc { position: absolute; left: 298px; top: 22px; display: flex; flex-direction: column; font-family: Lato, sans-serif; font-size: 16px; line-height: 20px; color: #fff; }
.loc strong { font-size: 15px; font-weight: 900; color: #00a650; text-shadow: 1px 1px 2px rgba(0, 50, 50, .6); }
.logo { position: absolute; left: 429px; top: 18px; width: 86px; height: 50px; box-sizing: border-box; padding-left: 22px; border-radius: 8px; display: flex; font: 700 30px/50px "Liberation Serif", serif; background: radial-gradient(circle at 30% 20%, #4a1080, transparent 40%), radial-gradient(circle at 20% 80%, #5a1578, transparent 35%), radial-gradient(circle at 80% 70%, #4c0c74, transparent 40%), #2a0650; box-shadow: 0 2px 5px rgba(0, 0, 0, .7); }
.logo span { height: 38px; line-height: 50px; margin-right: -3px; border-bottom: 2px solid; }
.logo .c { color: #3bb5d0; }
.logo .f { color: #a0a0a0; }
.logo .s { color: #fff; border: 0; line-height: 60px; }
h1 { position: absolute; right: 146px; top: 102px; margin: 0; font: 900 32px/42px Lato, sans-serif; color: #f7e681; text-decoration: underline; text-decoration-thickness: 2px; text-underline-offset: 4px; text-shadow: 2px 2px 2px rgba(0, 40, 50, .6); }
.copy { position: absolute; right: 30px; top: 156px; width: 480px; font: 19px/23px Lato, sans-serif; color: #fff; }
.copy p { margin: 0; text-align: right; white-space: nowrap; }
.copy .gap { margin-top: 23px; }
.copy .spread { margin-left: auto; text-align-last: justify; white-space: normal; }
.copy .l2 { width: 284px; }
.copy .l5 { width: 250px; }
.copy .e1 { padding-right: 167px; }
.copy .e2 { padding-right: 87px; }
.copy .e3 { padding-right: 249px; }
.copy .e4 { padding-right: 243px; }
.copy .e5 { padding-right: 253px; }
.copy strong { font-weight: 900; color: #06215e; text-shadow: 1px 1px 1px rgba(0, 30, 60, .5); }
.fact { position: absolute; left: 338px; font: 19px/24px Lato, sans-serif; color: #fff; font-variant-numeric: oldstyle-nums; white-space: nowrap; }
.fact strong { font-weight: 900; color: #c00000; text-shadow: 1px 1px 2px rgba(0, 30, 60, .8); }
.fact i { color: #06215e; font-style: normal; }
.hours { top: 496px; }
.salary { top: 597px; line-height: 23px; }
.notes { flex: none; height: 40px; border-top: 1px solid #bdbdbd; }

.scrolls { display: flex; flex-direction: column; flex: none; width: 20px; }
.vscroll { flex: 1; min-height: 0; display: flex; flex-direction: column; padding: 2px 1px 0 0; }
.sb { box-sizing: border-box; width: 19px; height: 19px; background: #fff; border: 1px solid #c0c0c0; }
.scrolls .car { border-width: 5px; border-bottom: 0; border-top-color: #777; }
.track { flex: 1; display: flex; flex-direction: column; background: #dadada; }
.before { flex: 285; }
.thumbbar { flex: 133; background: #fff; border: 1px solid #a6a6a6; }
.after { flex: 238; }
.pg { height: 22px; width: 19px; }
.nscroll { flex: none; height: 36px; padding-top: 29px; }
.nscroll .sb { height: 17px; }

.status { flex: none; display: flex; align-items: center; height: 26px; border-top: 1px solid #bdbdbd; background: #f3f3f3; font-size: 12px; }
.pos { margin-left: 10px; margin-right: auto; }
.stx { gap: 6px; width: 73px; justify-content: flex-start; }
.stx.cm { gap: 3px; width: 104px; }
.view { width: 50px; height: 26px; }
.view.on { background: #c8c8c8; }
.pm { width: 11px; height: 11px; margin-left: 7px; background: linear-gradient(#555, #555) center / 11px 1px no-repeat; }
.plus { margin-left: 6px; background: linear-gradient(#555, #555) center / 11px 1px no-repeat, linear-gradient(#555, #555) center / 1px 11px no-repeat; }
.zoom { appearance: none; width: 125px; height: 20px; margin: 0 0 0 5px; background: linear-gradient(#a6a6a6, #a6a6a6) center / 100% 1px no-repeat; }
.zoom::-webkit-slider-thumb { appearance: none; width: 6px; height: 14px; background: #666; }
.pct { width: 48px; margin-left: 17px; color: #505050; }
.fit { margin-right: 8px; }

.flyout { position: absolute; left: 60px; bottom: 50px; width: 52%; max-width: 980px; height: 800px; background: #1f1f1f; }

.taskbar { flex: none; display: flex; height: 50px; background: #262626; color: #fff; }
.start { width: 60px; }
.searchbox { box-sizing: border-box; display: flex; align-items: center; width: 430px; border: 3px solid #3f3f3f; padding-left: 12px; background: #fff; }
.caret { width: 1px; height: 25px; margin-left: 15px; background: #000; }
.searchbox input { flex: 1; min-width: 0; border: 0; outline: 0; padding: 0; font: 18px/26px "Open Sans", sans-serif; color: #000; }
.searchbox input::placeholder { color: #000; opacity: 1; }
.sys { width: 60px; }
.tv { margin-right: 3px; }
.app { width: 62px; position: relative; }
.app.open::after { content: ""; position: absolute; left: 6px; right: 5px; bottom: 0; height: 3px; background: #b9b3b6; }
.tray { display: flex; align-items: center; margin-left: auto; }
.battery { position: relative; box-sizing: border-box; width: 62px; height: 25px; border: 3px solid #fff; background: linear-gradient(90deg, #159a49 39%, #000 39%); font-size: 16px; line-height: 19px; text-align: center; margin-right: 10px; }
.battery::after { content: ""; position: absolute; right: -5px; top: 4px; width: 2px; height: 11px; background: #fff; }
.ti { margin-right: 12px; }
.ti.plug { margin-left: -3px; }
.clock { display: flex; flex-direction: column; align-items: center; width: 77px; line-height: 23px; }
.notif { margin: 4px 15px 0 23px; }
.peek { width: 1px; height: 50px; margin-right: 4px; background: #6a6a6a; }
</style>
